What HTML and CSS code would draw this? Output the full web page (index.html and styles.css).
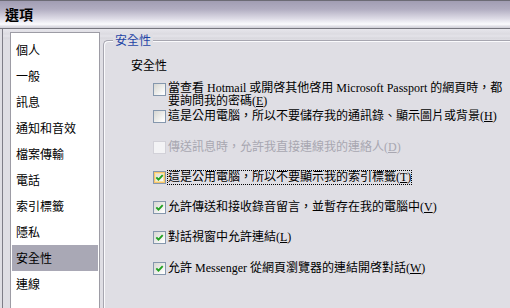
FILE: index.html
```html
<!DOCTYPE html>
<html lang="zh-Hant">
<head>
<meta charset="utf-8">
<title>選項</title>
<link rel="stylesheet" href="styles.css">
</head>
<body>
<div class="window">
  <div class="titlebar">選項</div>
  <div class="main">
    <ul class="nav">
      <li>個人</li>
      <li>一般</li>
      <li>訊息</li>
      <li>通知和音效</li>
      <li>檔案傳輸</li>
      <li>電話</li>
      <li>索引標籤</li>
      <li>隱私</li>
      <li class="active">安全性</li>
      <li>連線</li>
    </ul>
    <fieldset class="group">
      <legend>安全性</legend>
      <div class="sub">安全性</div>
      <div class="opts">
        <div class="opt first">
          <span class="cb"></span>
          <span class="lbl"><span class="ln">當查看 Hotmail 或開啓其他啓用 Microsoft Passport 的網頁時，都</span><span class="ln">要詢問我的密碼(<u>E</u>)</span></span>
        </div>
        <div class="opt second">
          <span class="cb"></span>
          <span class="lbl">這是公用電腦，所以不要儲存我的通訊錄、顯示圖片或背景(<u>H</u>)</span>
        </div>
        <div class="opt third disabled">
          <span class="cb"></span>
          <span class="lbl">傳送訊息時，允許我直接連線我的連絡人(<u>D</u>)</span>
        </div>
        <div class="opt">
          <span class="cb checked hover"><svg viewBox="0 0 11 11" width="11" height="11"><polyline points="2.3,5.3 4.5,7.6 8.7,3.2" fill="none" stroke="#21a121" stroke-width="1.9"/></svg></span>
          <span class="lbl focus">這是公用電腦，所以不要顯示我的索引標籤(<u>T</u>)</span>
        </div>
        <div class="opt">
          <span class="cb checked"><svg viewBox="0 0 11 11" width="11" height="11"><polyline points="2.3,5.3 4.5,7.6 8.7,3.2" fill="none" stroke="#21a121" stroke-width="1.9"/></svg></span>
          <span class="lbl">允許傳送和接收錄音留言，並暫存在我的電腦中(<u>V</u>)</span>
        </div>
        <div class="opt">
          <span class="cb checked"><svg viewBox="0 0 11 11" width="11" height="11"><polyline points="2.3,5.3 4.5,7.6 8.7,3.2" fill="none" stroke="#21a121" stroke-width="1.9"/></svg></span>
          <span class="lbl">對話視窗中允許連結(<u>L</u>)</span>
        </div>
        <div class="opt last">
          <span class="cb checked"><svg viewBox="0 0 11 11" width="11" height="11"><polyline points="2.3,5.3 4.5,7.6 8.7,3.2" fill="none" stroke="#21a121" stroke-width="1.9"/></svg></span>
          <span class="lbl">允許 Messenger 從網頁瀏覽器的連結開啓對話(<u>W</u>)</span>
        </div>
      </div>
    </fieldset>
  </div>
</div>
</body>
</html>
```
FILE: styles.css
```css
html, body {
  margin: 0;
  padding: 0;
}
body {
  width: 510px;
  height: 308px;
  overflow: hidden;
  background: #dfdee4;
  font-family: "Noto Sans CJK TC", sans-serif;
  font-size: 12px;
  color: #000;
}
.window {
  width: 510px;
  height: 308px;
  overflow: hidden;
}
.titlebar {
  box-sizing: border-box;
  height: 29px;
  border-top: 1px solid #6c6b75;
  border-bottom: 1px solid #77767f;
  background: linear-gradient(to bottom, #a19db3 0%, #b1adc1 30%, #dddbe6 65%, #fbfbfe 86%, #e2e1e8 93%, #cfced6 100%);
  padding-left: 5px;
  font-weight: bold;
  font-size: 14px;
  line-height: 26px;
}
.main {
  display: flex;
  align-items: flex-start;
  height: 279px;
  margin-left: 2px;
  border-left: 1px solid #7e7d87;
  background: linear-gradient(to bottom, #e7e6ec 0, #dcdbe1 5px, #e4e3e9 7px, #d9d8de 9px, #dfdee4 11px);
}
.nav {
  list-style: none;
  box-sizing: border-box;
  width: 90px;
  height: 280px;
  margin: 3px 0 0 7px;
  padding: 4px 0 0;
  border: 1px solid #9d9ca5;
  background: #fff;
  flex: none;
}
.nav li {
  height: 26px;
  line-height: 26px;
  padding-left: 4px;
  margin: 0 1px;
  font-size: 12px;
}
.nav li.active {
  background: #a9a8b5;
}
.group {
  flex: 1;
  min-width: 0;
  margin: 4px 0 0 3px;
  padding: 11px 0 0 27px;
  border: 1px solid #a7a6b0;
  border-right: 0;
  border-bottom: 0;
  border-top-left-radius: 5px;
  box-shadow: inset 1px 1px 0 #fafafc;
  height: 300px;
}
.group legend {
  margin-left: -18px;
  padding: 0 2px;
  line-height: 14px;
  color: #1f45a6;
  background: #dfdee4;
}
.sub {
  line-height: 14px;
}
.opts {
  margin: 10px 0 0 22px;
  display: flex;
  flex-direction: column;
}
.opt {
  display: flex;
  align-items: flex-start;
  margin-top: 17px;
  line-height: 13px;
}
.opt.first {
  margin-top: 0;
}
.opt.first .cb {
  margin-top: 1px;
}
.ln {
  display: block;
  height: 13px;
}
.opt.second {
  margin-top: 2px;
}
.opt.third,
.opt.last {
  margin-top: 18px;
}
.cb {
  box-sizing: border-box;
  width: 13px;
  height: 13px;
  flex: none;
  margin-right: 2px;
  border: 1px solid #8597ad;
  background: linear-gradient(135deg, #d6d6d2 0%, #ecece9 50%, #fcfcfc 85%);
  display: flex;
  align-items: center;
  justify-content: center;
}
.cb svg {
  display: block;
}
.cb.hover {
  box-shadow: inset 0 0 0 1px #f5c46a, inset 0 0 0 2px #fbe3a4;
}
.disabled .cb {
  border-color: #d2d1d8;
  background: #f3f3f5;
}
.disabled .lbl {
  color: #a8a7b1;
}
.lbl {
  font-family: "Liberation Serif", "Noto Sans CJK TC", serif;
  font-size: 12px;
  white-space: nowrap;
}
.lbl.focus {
  outline: 1px dotted #000;
  outline-offset: 0;
}
.lbl u {
  text-underline-offset: 1px;
}
```
